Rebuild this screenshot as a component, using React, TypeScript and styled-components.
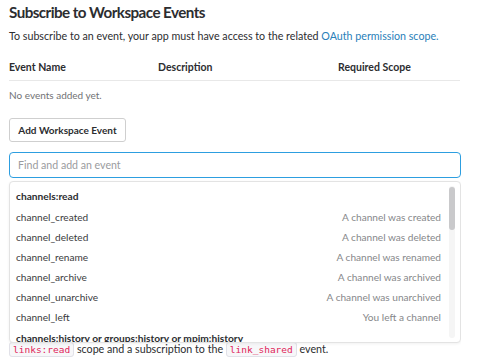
import React from "react";
import styled, { createGlobalStyle } from "styled-components";

const Global = createGlobalStyle`
  html, body { margin: 0; padding: 0; background: #fff; }
  body { font-family: Lato, "Open Sans", sans-serif; color: #2c2d30; -webkit-font-smoothing: antialiased; }
  * { box-sizing: border-box; }
`;

const Page = styled.div`
  padding: 2px 0 0 9px;
  width: 461px;
  height: 362px;
  overflow: hidden;
`;

const Title = styled.h2`
  margin: 0;
  font-size: 15.2px;
  line-height: 21px;
  font-weight: 700;
  letter-spacing: -0.55px;
  color: #2c2d30;
`;

const Lead = styled.p`
  margin: 6px 0 0;
  font-size: 10.7px;
  line-height: 14px;
  color: #2c2d30;
  white-space: nowrap;
`;

const Link = styled.a`
  color: #2a80b9;
  text-decoration: none;
`;

const HeaderRow = styled.div`
  display: grid;
  grid-template-columns: 149px 180px 1fr;
  margin-top: 17px;
  padding-bottom: 6px;
  border-bottom: 1px solid #e8e8e8;
  width: 451px;
`;

const HeaderCell = styled.div`
  font-size: 10.5px;
  line-height: 14px;
  font-weight: 700;
  color: #2c2d30;
`;

const Empty = styled.div`
  margin-top: 7px;
  font-size: 10px;
  line-height: 14px;
  color: #717274;
`;

const Button = styled.button`
  display: block;
  margin-top: 16px;
  height: 24px;
  width: 117px;
  padding: 0;
  border: 1px solid #cfcfcf;
  border-radius: 3px;
  background: #fff;
  font-family: Lato, sans-serif;
  font-size: 10px;
  font-weight: 700;
  color: #2c2d30;
`;

const Picker = styled.div`
  position: relative;
  margin-top: 10px;
  width: 452px;
`;

const Input = styled.div`
  height: 26px;
  border: 1px solid #2d9ee0;
  border-radius: 4px;
  padding: 0 8px;
  display: flex;
  align-items: center;
  font-size: 10.6px;
  color: #9a9b9e;
`;

const Menu = styled.div`
  position: absolute;
  left: 0;
  right: 0;
  top: 29px;
  height: 162px;
  background: #fff;
  border: 1px solid #e3e3e3;
  border-radius: 4px;
  box-shadow: 0 1px 3px rgba(0, 0, 0, 0.06);
  display: flex;
  overflow: hidden;
  z-index: 2;
`;

const List = styled.div`
  flex: 1;
  padding: 3px 8px 0 6px;
`;

const Group = styled.div`
  height: 22px;
  display: flex;
  align-items: center;
  font-size: 10.2px;
  font-weight: 700;
  color: #2c2d30;
  white-space: nowrap;
`;

const Item = styled.div`
  height: 20px;
  display: flex;
  align-items: center;
  justify-content: space-between;
  font-size: 10.1px;
  white-space: nowrap;
`;

const ItemName = styled.span`
  color: #3a3b3d;
`;

const ItemDesc = styled.span`
  color: #86878a;
`;

const Track = styled.div`
  width: 6px;
  margin: 4px 5px 4px 0;
  border-radius: 3px;
  background: #f5f5f5;
`;

const Thumb = styled.div`
  height: 43px;
  margin-top: 1px;
  border-radius: 3px;
  background: #c9c9cb;
`;

const NoteArea = styled.div`
  margin-top: 161px;
`;

const Note = styled.p`
  margin: 0;
  font-size: 10.7px;
  line-height: 20px;
  color: #2c2d30;
  white-space: nowrap;
`;

const Code = styled.code`
  font-family: "DejaVu Sans Mono", "Liberation Mono", monospace;
  font-size: 9.5px;
  color: #e01e5a;
  background: #f7f7f9;
  border: 1px solid #e1e1e8;
  border-radius: 3px;
  padding: 1px 3px;
`;

const events = [
  ["channel_created", "A channel was created"],
  ["channel_deleted", "A channel was deleted"],
  ["channel_rename", "A channel was renamed"],
  ["channel_archive", "A channel was archived"],
  ["channel_unarchive", "A channel was unarchived"],
  ["channel_left", "You left a channel"],
];

export default function App() {
  return (
    <>
      <Global />
      <Page>
        <Title>Subscribe to Workspace Events</Title>
        <Lead>
          To subscribe to an event, your app must have access to the related{" "}
          <Link href="#">OAuth permission scope.</Link>
        </Lead>
        <HeaderRow>
          <HeaderCell>Event Name</HeaderCell>
          <HeaderCell>Description</HeaderCell>
          <HeaderCell>Required Scope</HeaderCell>
        </HeaderRow>
        <Empty>No events added yet.</Empty>
        <Button>Add Workspace Event</Button>
        <Picker>
          <Input>Find and add an event</Input>
          <Menu>
            <List>
              <Group>channels:read</Group>
              {events.map(([n, d]) => (
                <Item key={n}>
                  <ItemName>{n}</ItemName>
                  <ItemDesc>{d}</ItemDesc>
                </Item>
              ))}
              <Group>channels:history or groups:history or mpim:history</Group>
            </List>
            <Track>
              <Thumb />
            </Track>
          </Menu>
          <NoteArea>
            <Note>
              <Code>links:read</Code> scope and a subscription to the{" "}
              <Code>link_shared</Code> event.
            </Note>
          </NoteArea>
        </Picker>
      </Page>
    </>
  );
}
